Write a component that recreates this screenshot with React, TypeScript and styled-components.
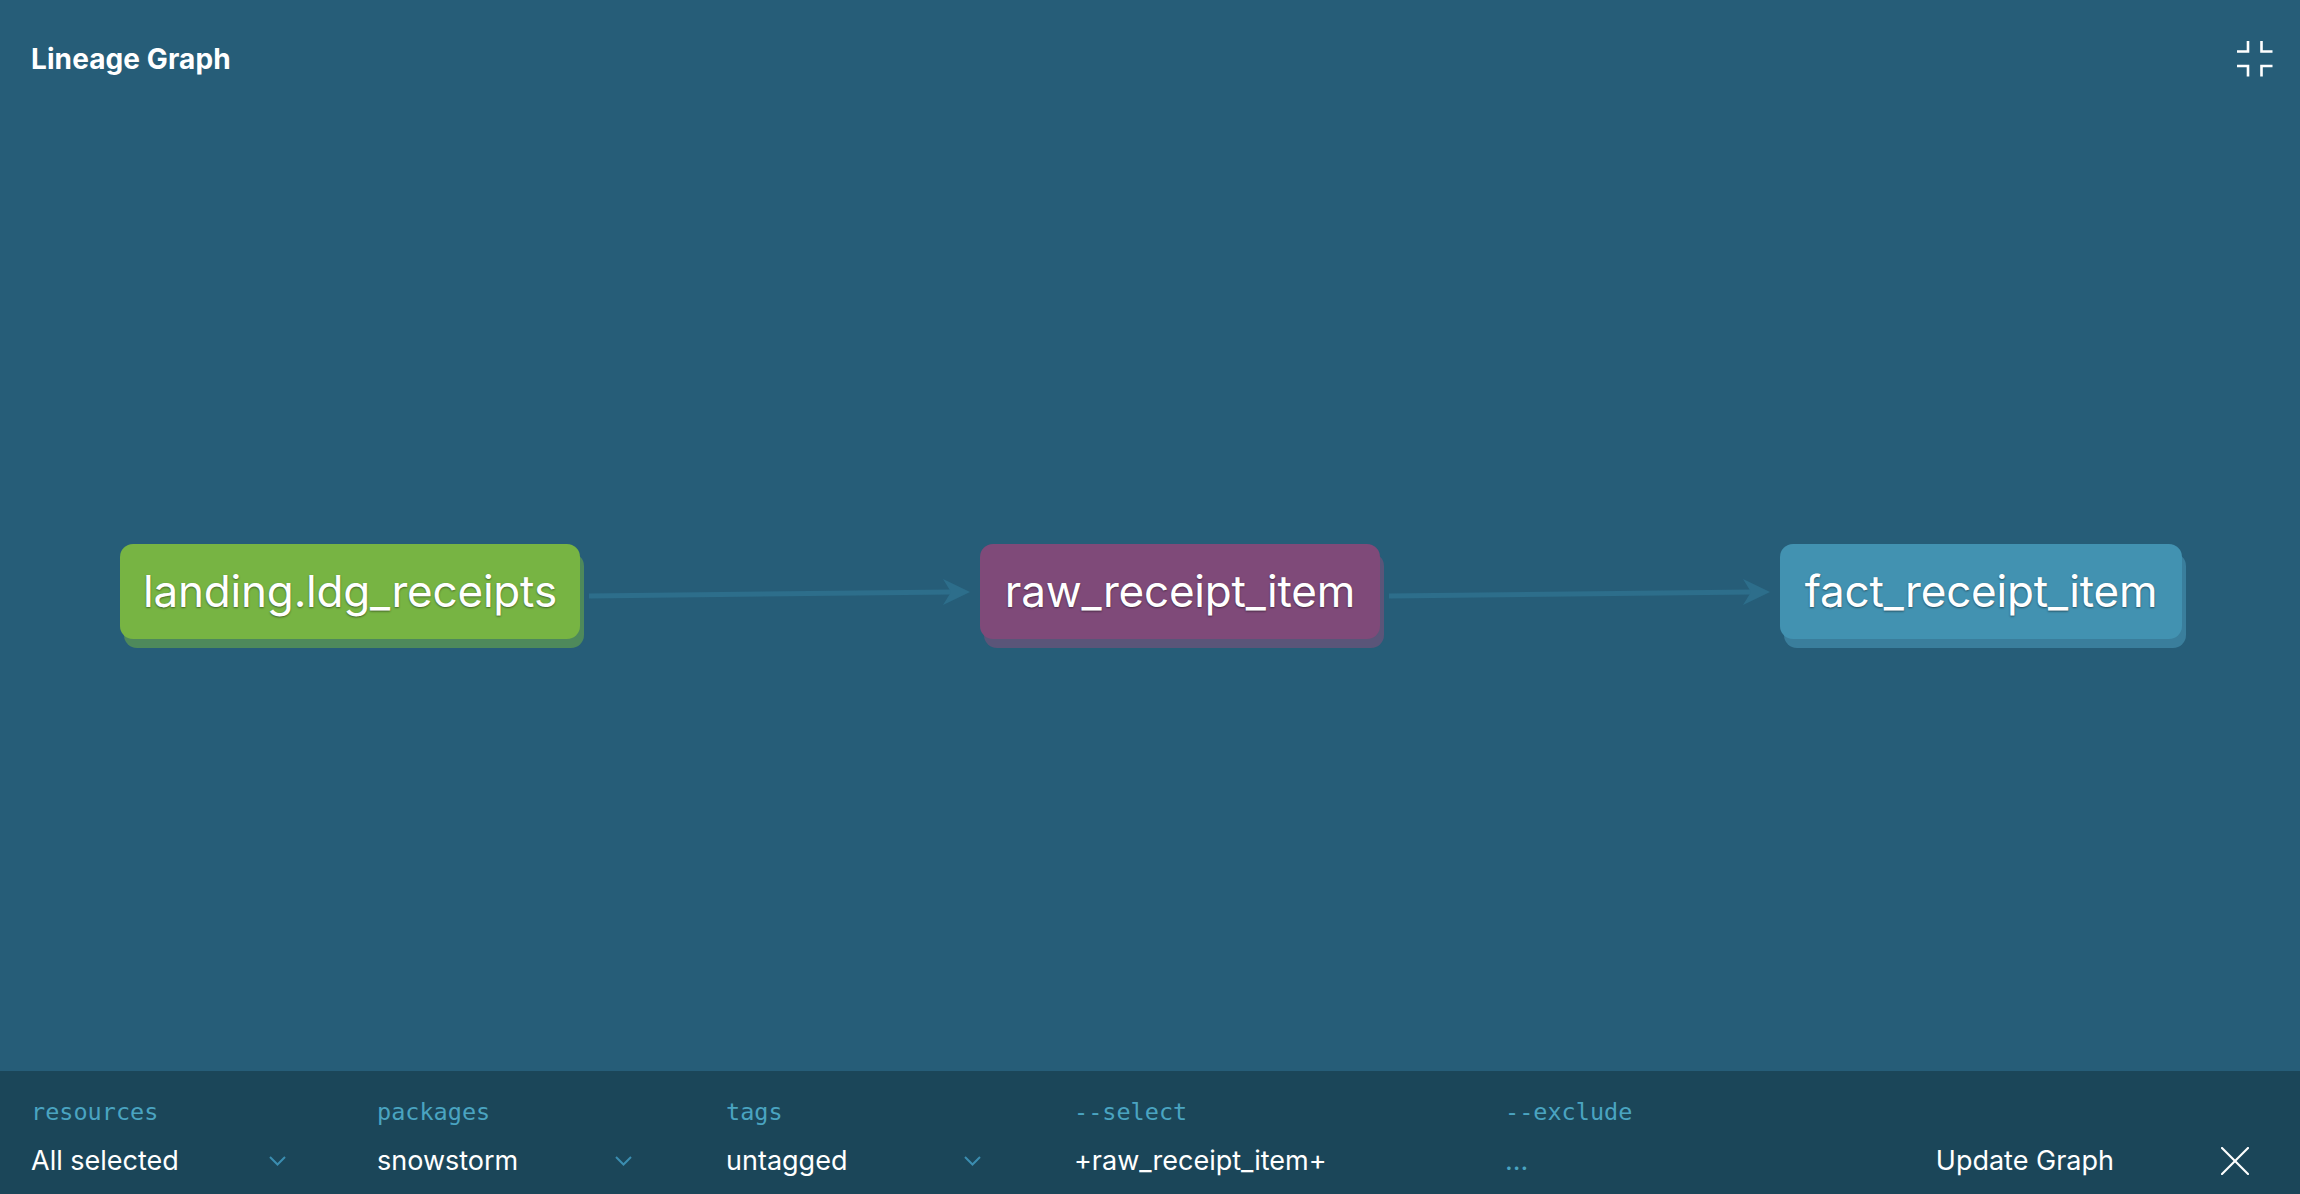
import React, { FC } from 'react';
import styled, { createGlobalStyle } from 'styled-components';

const GlobalStyle = createGlobalStyle`
  html, body {
    margin: 0;
    padding: 0;
    background: #265d78;
  }
  * {
    box-sizing: border-box;
  }
`;

const Page = styled.div`
  display: flex;
  flex-direction: column;
  width: 100vw;
  height: 100vh;
  overflow: hidden;
  background: #265d78;
  font-family: Inter, 'Noto Sans', sans-serif;
  color: #ffffff;
`;

const Canvas = styled.div`
  position: relative;
  flex: 1;
`;

const Header = styled.div`
  position: relative;
  z-index: 2;
  display: flex;
  align-items: center;
  justify-content: space-between;
  height: 118px;
  padding: 0 27px 0 31px;
`;

const Title = styled.h1`
  margin: 0;
  font-size: 28px;
  font-weight: 700;
  letter-spacing: 0.1px;
  line-height: 1;
`;

const IconButton = styled.button`
  display: flex;
  align-items: center;
  justify-content: center;
  padding: 0;
  border: none;
  background: none;
  cursor: pointer;
`;

const Edges = styled.svg`
  position: absolute;
  inset: 0;
  width: 100%;
  height: 100%;
  pointer-events: none;
`;

const Node = styled.div<{ $x: number; $y: number; $w: number; $bg: string; $shade: string }>`
  position: absolute;
  left: ${(p) => p.$x}px;
  top: ${(p) => p.$y}px;
  width: ${(p) => p.$w}px;
  height: 95px;
  padding-bottom: 2px;
  display: flex;
  align-items: center;
  justify-content: center;
  border-radius: 13px;
  background: ${(p) => p.$bg};
  box-shadow: 4px 9px 0 ${(p) => p.$shade};
  font-size: 44px;
  font-weight: 400;
  letter-spacing: -0.2px;
  color: #ffffff;
  text-shadow: 0 1px 2px rgba(0, 0, 0, 0.45);
  white-space: nowrap;
`;

const Bar = styled.div`
  display: flex;
  align-items: flex-end;
  height: 123px;
  padding: 24px 51px 16px 31px;
  background: #1b4659;
`;

const Field = styled.div<{ $width?: number }>`
  display: flex;
  flex-direction: column;
  gap: 18px;
  ${(p) => (p.$width ? `width: ${p.$width}px;` : 'flex: 1;')}
`;

const Label = styled.span`
  font-family: 'DejaVu Sans Mono', 'Liberation Mono', monospace;
  font-size: 23.5px;
  line-height: 28px;
  color: #4aa4c1;
`;

const SelectBox = styled.div`
  display: flex;
  align-items: center;
  justify-content: space-between;
  width: 255px;
  height: 34px;
`;

const Value = styled.span<{ $placeholder?: boolean }>`
  font-size: 27px;
  line-height: 34px;
  color: ${(p) => (p.$placeholder ? '#4aa4c1' : '#ffffff')};
  white-space: nowrap;
`;

const UpdateButton = styled.button`
  height: 34px;
  padding: 0;
  margin-right: 107px;
  border: none;
  background: none;
  font-family: Inter, 'Noto Sans', sans-serif;
  font-size: 27px;
  line-height: 34px;
  color: #ffffff;
  cursor: pointer;
`;

const CloseButton = styled(IconButton)`
  height: 34px;
`;

const Chevron: FC = () => (
  <svg width='17' height='10' viewBox='0 0 17 10'>
    <polyline points='1,1 8.5,8.5 16,1' fill='none' stroke='#3b8db0' strokeWidth='2' />
  </svg>
);

const MinimizeIcon: FC = () => (
  <svg width='36' height='36' viewBox='0 0 36 36' fill='none' stroke='#ffffff' strokeWidth='2.6'>
    <polyline points='0,10.5 11,10.5 11,0' />
    <polyline points='24.5,0 24.5,10.5 35.5,10.5' />
    <polyline points='0,25 11,25 11,35.5' />
    <polyline points='24.5,35.5 24.5,25 35.5,25' />
  </svg>
);

const CloseIcon: FC = () => (
  <svg width='28' height='28' viewBox='0 0 28 28' stroke='#ffffff' strokeWidth='2.2' strokeLinecap='round'>
    <line x1='1' y1='1' x2='27' y2='27' />
    <line x1='27' y1='1' x2='1' y2='27' />
  </svg>
);

const nodes = [
  { id: 'landing', label: 'landing.ldg_receipts', x: 120, w: 460, bg: '#77b443', shade: '#4e895b' },
  { id: 'raw', label: 'raw_receipt_item', x: 980, w: 400, bg: '#7f4a79', shade: '#5a5579' },
  { id: 'fact', label: 'fact_receipt_item', x: 1780, w: 402, bg: '#4292b1', shade: '#3a7e9c' },
];

const edges = [
  { from: 589, to: 970 },
  { from: 1389, to: 1770 },
];

const filters = [
  { label: 'resources', value: 'All selected', width: 346 },
  { label: 'packages', value: 'snowstorm', width: 349 },
  { label: 'tags', value: 'untagged', width: 348 },
];

const App: FC = () => {
  return (
    <Page>
      <GlobalStyle />
      <Canvas>
        <Header>
          <Title>Lineage Graph</Title>
          <IconButton type='button'>
            <MinimizeIcon />
          </IconButton>
        </Header>
        <Edges>
          {edges.map((e) => (
            <g key={e.from} fill='#2d6e8b' stroke='#2d6e8b'>
              <path d={`M${e.from} 596 L${e.to - 18} 592`} strokeWidth='5' fill='none' />
              <polygon
                points={`${e.to},592 ${e.to - 27},579 ${e.to - 19},592 ${e.to - 27},605`}
                stroke='none'
              />
            </g>
          ))}
        </Edges>
        {nodes.map((n) => (
          <Node key={n.id} $x={n.x} $y={544} $w={n.w} $bg={n.bg} $shade={n.shade}>
            {n.label}
          </Node>
        ))}
      </Canvas>
      <Bar>
        {filters.map((f) => (
          <Field key={f.label} $width={f.width}>
            <Label>{f.label}</Label>
            <SelectBox>
              <Value>{f.value}</Value>
              <Chevron />
            </SelectBox>
          </Field>
        ))}
        <Field $width={431}>
          <Label>--select</Label>
          <Value>+raw_receipt_item+</Value>
        </Field>
        <Field>
          <Label>--exclude</Label>
          <Value $placeholder>...</Value>
        </Field>
        <UpdateButton type='button'>Update Graph</UpdateButton>
        <CloseButton type='button'>
          <CloseIcon />
        </CloseButton>
      </Bar>
    </Page>
  );
};

export default App;
